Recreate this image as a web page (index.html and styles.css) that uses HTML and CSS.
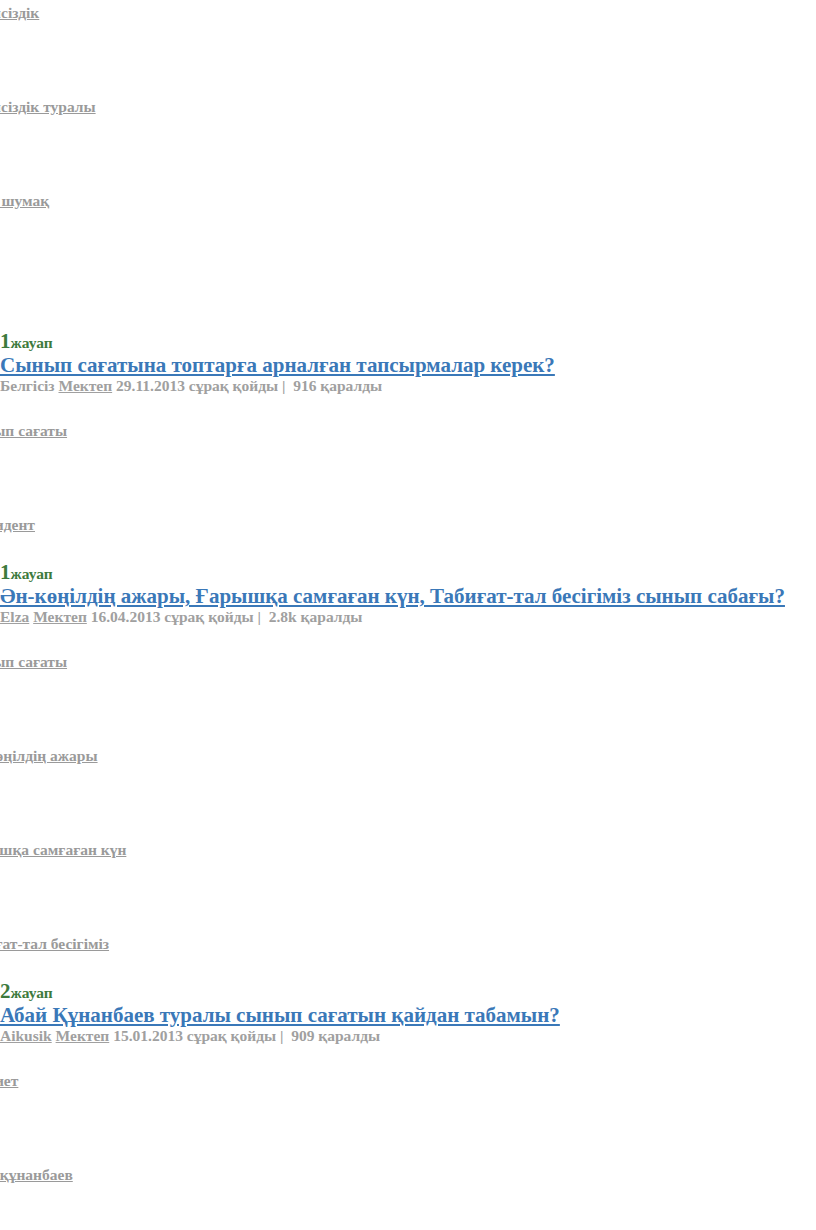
FILE: index.html
```html
<!DOCTYPE html>
<html>
  <head>
    <title>Сынып сағаты</title>
    <link rel="stylesheet" href="styles.css">
  </head>
  <body>
    <div class="page">
      <ul class="tags">
        <li><a class="tag" href="#">Тәуелсіздік</a></li>
        <li><a class="tag" href="#">Тәуелсіздік туралы</a></li>
        <li><a class="tag" href="#">Өлең шумақ</a></li>
      </ul>

      <div class="question question-first">
        <div class="answers"><span class="answers-num">1</span>жауап</div>
        <a class="title" href="#">Сынып сағатына топтарға арналған тапсырмалар керек?</a>
        <div class="meta">
          Белгісіз <a href="#">Мектеп</a> 29.11.2013 сұрақ қойды |&nbsp; 916 қаралды
        </div>
      </div>

      <ul class="tags">
        <li><a class="tag" href="#">Сынып сағаты</a></li>
        <li><a class="tag" href="#">Президент</a></li>
      </ul>

      <div class="question">
        <div class="answers"><span class="answers-num">1</span>жауап</div>
        <a class="title" href="#">Ән-көңілдің ажары, Ғарышқа самғаған күн, Табиғат-тал бесігіміз сынып сабағы?</a>
        <div class="meta">
          <a href="#">Elza</a> <a href="#">Мектеп</a> 16.04.2013 сұрақ қойды |&nbsp; 2.8k қаралды
        </div>
      </div>

      <ul class="tags">
        <li><a class="tag" href="#">Сынып сағаты</a></li>
        <li><a class="tag" href="#">Ән-көңілдің ажары</a></li>
        <li><a class="tag" href="#">Ғарышқа самғаған күн</a></li>
        <li><a class="tag" href="#">Табиғат-тал бесігіміз</a></li>
      </ul>

      <div class="question">
        <div class="answers"><span class="answers-num">2</span>жауап</div>
        <a class="title" href="#">Абай Құнанбаев туралы сынып сағатын қайдан табамын?</a>
        <div class="meta">
          <a href="#">Aikusik</a> <a href="#">Мектеп</a> 15.01.2013 сұрақ қойды |&nbsp; 909 қаралды
        </div>
      </div>

      <ul class="tags">
        <li><a class="tag" href="#">Әдебиет</a></li>
        <li><a class="tag" href="#">Абай құнанбаев</a></li>
      </ul>
    </div>
  </body>
</html>
```

FILE: styles.css
```css
* {
  box-sizing: border-box;
  margin: 0;
  padding: 0;
}

body {
  font-family: "Liberation Serif", "Times New Roman", serif;
  font-weight: bold;
  background: #ffffff;
  overflow: hidden;
}

.page {
  padding-top: 4px;
}

/* tag list, left part is cut off by the page edge */
.tags {
  list-style: none;
  display: flex;
  flex-direction: column;
  gap: 76px;
  margin-top: 27px;
}

.tags:first-child {
  margin-top: 0;
}

.tags li {
  line-height: 18px;
  font-size: 15.5px;
  white-space: nowrap;
}

.tag {
  display: inline-block;
  margin-left: -39px;
  color: #9a9a9a;
  text-decoration: underline;
}

.question {
  margin-top: 28px;
}

.question-first {
  margin-top: 121px;
}

.answers {
  color: #3d7a3d;
  font-size: 15.5px;
  line-height: 20px;
}

.answers-num {
  font-size: 21px;
}

.title {
  display: block;
  font-size: 21px;
  line-height: 24px;
  color: #3a78b8;
  text-decoration: underline;
  white-space: nowrap;
}

.meta {
  font-size: 15.5px;
  line-height: 18px;
  color: #a0a0a0;
  white-space: nowrap;
}

.meta a {
  color: #a0a0a0;
  text-decoration: underline;
}
```
